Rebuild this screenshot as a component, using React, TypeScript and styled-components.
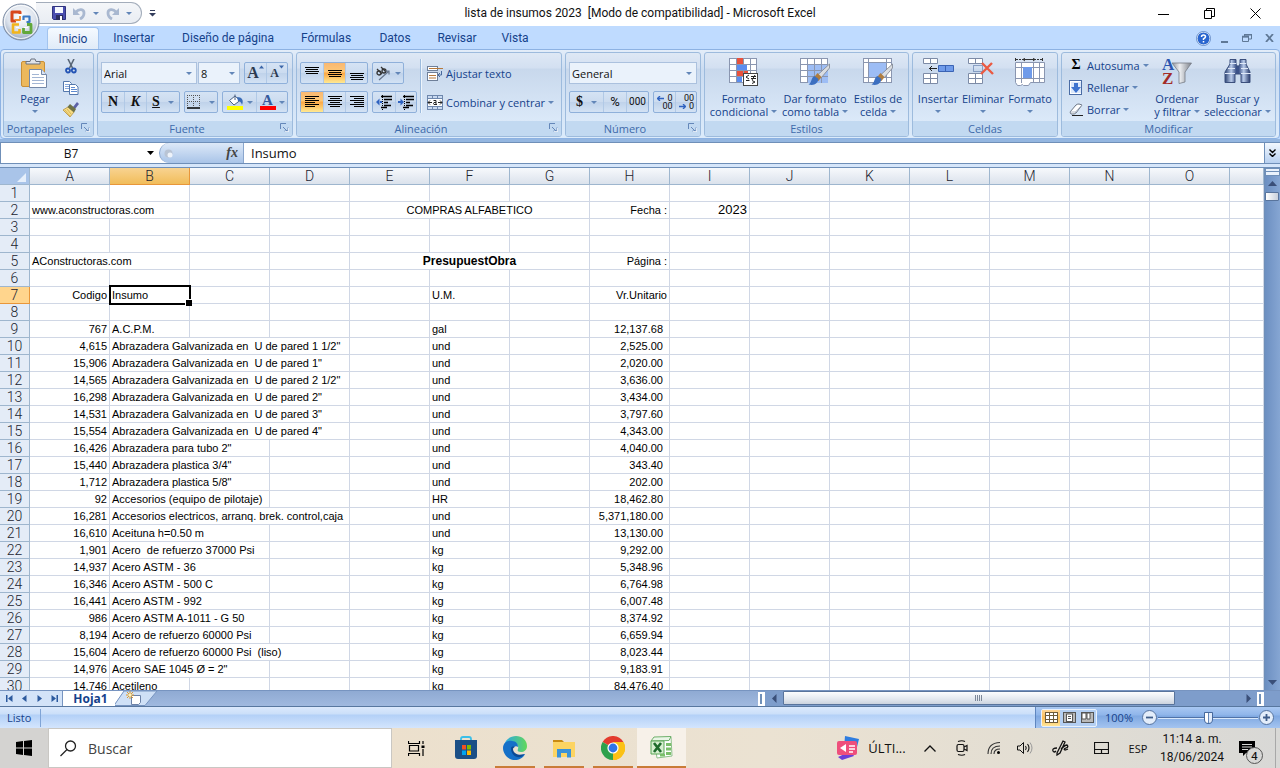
import React from "react";
import styled, { createGlobalStyle, css } from "styled-components";

const ui = `"Open Sans", "Noto Sans", sans-serif`;
const light = `Roboto, "Open Sans", sans-serif`;
const navy = "#15428b";

const GlobalStyle = createGlobalStyle`
  * { box-sizing: border-box; }
  body { margin: 0; background: #fff; font-family: ${ui}; font-size: 11px; overflow: hidden; }
  button, input, select { font: inherit; color: inherit; margin: 0; padding: 0; border: 0; background: none; border-radius: 0; outline: none; }
  button { display: inline-flex; align-items: center; justify-content: center; }
  svg { display: block; flex: none; }
`;

const Window = styled.div`
  display: flex;
  flex-direction: column;
  height: 100vh;
  overflow: hidden;
`;

/* Title bar */
const TitleBar = styled.header`
  position: relative;
  display: grid;
  grid-template-columns: 1fr auto 1fr;
  align-items: center;
  height: 26px;
  flex: none;
  background: #fff;
`;
const Title = styled.h1`
  margin: 0;
  font-family: ${light};
  font-size: 12px;
  font-weight: 400;
  color: #111;
  white-space: pre;
`;
const OfficeButton = styled.button`
  position: absolute;
  left: 1px;
  top: 2px;
  z-index: 2;
`;
const QuickAccess = styled.div`
  display: flex;
  align-items: center;
  margin-left: 36px;
`;
const QuickPill = styled.div`
  display: flex;
  align-items: center;
  gap: 7px;
  width: 106px;
  height: 22px;
  padding-left: 16px;
  border: 1px solid #a3adbb;
  border-left: 0;
  border-radius: 0 11px 11px 0;
  background: linear-gradient(#f4f6f9, #e9edf3);
`;
const QuickMore = styled.button`
  width: 20px;
  height: 20px;
`;
const WindowButtons = styled.div`
  display: flex;
  justify-content: flex-end;
  padding-right: 2px;
`;
const WindowButton = styled.button`
  width: 46px;
  height: 24px;
`;

/* Tabs */
const TabRow = styled.nav`
  display: flex;
  align-items: flex-end;
  height: 23px;
  flex: none;
  padding-left: 47px;
  background: #bfdbff;
  font-family: ${light};
  font-size: 12px;
`;
const RibbonTab = styled.button<{ $w: number; $on?: boolean }>`
  width: ${(p) => p.$w}px;
  height: 22px;
  color: ${navy};
  ${(p) =>
    p.$on &&
    css`
      border: 1px solid #a2c4ef;
      border-bottom: 0;
      border-radius: 4px 4px 0 0;
      background: linear-gradient(#f5faff, #e0ebf8);
    `}
`;
const DocButtons = styled.div`
  display: flex;
  align-items: center;
  height: 22px;
  margin-left: auto;
`;
const DocButton = styled.button`
  width: 22px;
  height: 22px;
`;

/* Ribbon */
const RibbonFrame = styled.section`
  flex: none;
  height: 93px;
  border-bottom: 3px solid #94b6e0;
  background: #bfdbff;
`;
const Ribbon = styled.div`
  display: flex;
  gap: 3px;
  height: 90px;
  padding: 2px 2px;
  border: 1px solid #8db2e3;
  border-radius: 4px;
  background: linear-gradient(#e3edf9, #cbdcf1 20px, #dcebfb);
`;
const GroupBox = styled.div<{ $w: number }>`
  display: flex;
  flex-direction: column;
  flex: none;
  width: ${(p) => p.$w}px;
  height: 85px;
  border: 1px solid #9dbbdd;
  border-radius: 3px;
  background: linear-gradient(#dee8f5 0, #d3e0f1 15px, #c8d8ec 16px, #dbe9f9 68px);
  overflow: hidden;
`;
const GroupBody = styled.div`
  display: flex;
  flex: 1;
  padding: 0 3px;
`;
const GroupLabel = styled.div`
  position: relative;
  height: 15px;
  line-height: 15px;
  text-align: center;
  color: #3e6aaa;
  background: #c2d9f1;
`;
const LaunchLabel = styled.span`
  display: block;
  padding-right: 16px;
`;
const Launcher = styled.button`
  position: absolute;
  right: 3px;
  top: 2px;
`;
const Rows = styled.div`
  display: flex;
  flex-direction: column;
  gap: 7px;
  padding-top: 9px;
`;
const ControlRow = styled.div`
  display: flex;
  gap: 4px;
  height: 22px;
`;
const Joined = styled.div`
  display: flex;
  gap: 1px;
`;
const Combo = styled.div<{ $w: number }>`
  position: relative;
  display: flex;
  align-items: center;
  width: ${(p) => p.$w}px;
  height: 22px;
  border: 1px solid #abc1de;
  background: #eaf2fb;
`;
const ComboSelect = styled.select`
  appearance: none;
  flex: 1;
  width: 100%;
  height: 20px;
  padding-left: 2px;
  color: #111;
`;
const ComboArrow = styled.span`
  position: absolute;
  right: 4px;
  pointer-events: none;
`;
const ButtonGroup = styled.div`
  display: flex;
  height: 22px;
  border: 1px solid #8fb0da;
  border-radius: 2px;
  background: linear-gradient(#d5e3f4 0, #cbdbef 10px, #bfd2ea 10px, #d3e2f4);
`;
const Tool = styled.button<{ $w: number; $on?: boolean }>`
  width: ${(p) => p.$w}px;
  height: 20px;
  gap: 3px;
  color: #111;
  & + & { border-left: 1px solid #b1c9e6; }
  ${(p) =>
    p.$on &&
    css`
      background: linear-gradient(#f9b872, #fdc877 9px, #fba645 10px, #ffe992);
    `}
`;
const Glyph = styled.span<{ $italic?: boolean; $under?: boolean; $size?: number }>`
  font-family: "Liberation Serif", serif;
  font-weight: 700;
  font-size: ${(p) => p.$size ?? 14}px;
  line-height: 16px;
  font-style: ${(p) => (p.$italic ? "italic" : "normal")};
  text-decoration: ${(p) => (p.$under ? "underline" : "none")};
`;
const Percent = styled.span`
  font: 400 13px/16px ${light};
`;
const Thousands = styled.span`
  font: 400 10px/16px ${light};
`;
const Gap = styled.span`
  width: 2px;
`;
const SizeMark = styled.span`
  display: flex;
  align-items: flex-start;
  color: #2c3a50;
`;
const Separator = styled.div`
  width: 2px;
  height: 54px;
  margin: 6px 5px 0 3px;
  border-left: 1px solid #9dbbdd;
  border-right: 1px solid #eef5fc;
`;
const TextTool = styled.button`
  gap: 3px;
  height: 22px;
  justify-content: flex-start;
  color: ${navy};
  white-space: nowrap;
`;
const SmallTools = styled.div`
  display: flex;
  flex-direction: column;
  align-items: flex-start;
  width: 86px;
  padding: 1px 0 0 3px;
`;
const ClipTools = styled.div`
  display: flex;
  flex-direction: column;
  align-items: center;
  gap: 7px;
  width: 16px;
  padding-top: 6px;
`;
const BigTool = styled.button<{ $w: number }>`
  flex-direction: column;
  justify-content: flex-start;
  flex: none;
  width: ${(p) => p.$w}px;
  height: 68px;
  padding-top: 5px;
  color: ${navy};
  white-space: nowrap;
`;
const BigIcon = styled.span`
  display: block;
  height: 34px;
`;
const BigLine = styled.span`
  display: flex;
  align-items: center;
  gap: 3px;
  height: 13px;
  line-height: 13px;
`;
const CaretMark = styled.i<{ $dark?: boolean }>`
  display: block;
  flex: none;
  width: 0;
  border: 3px solid transparent;
  border-top-color: ${(p) => (p.$dark ? "#111" : "#6286b8")};
  border-bottom: 0;
`;

/* Formula bar */
const FormulaBar = styled.div`
  display: flex;
  flex: none;
  height: 22px;
  border: 1px solid #6f8fb8;
  border-right: 0;
  background: #fff;
`;
const NameBox = styled.input`
  width: 140px;
  text-align: center;
  font-size: 12px;
  color: #111;
`;
const NameArrow = styled.button`
  width: 18px;
`;
const FxArea = styled.div`
  display: flex;
  align-items: center;
  justify-content: space-between;
  width: 85px;
  padding: 0 5px 0 4px;
  border: 1px solid #8aa6cd;
  border-width: 0 1px 0 1px;
  border-radius: 10px 0 0 10px;
  background: linear-gradient(#dde9f8, #a9c4e8);
`;
const Fx = styled.button`
  font: italic 700 14px/16px "Liberation Serif", serif;
  color: #444;
`;
const FormulaInput = styled.input`
  flex: 1;
  min-width: 0;
  padding-left: 7px;
  font-size: 13px;
  color: #111;
`;
const ExpandButton = styled.button`
  width: 16px;
  border-left: 1px solid #6f8fb8;
  background: linear-gradient(#f3f8fe, #b7d0f0);
`;
const BarGap = styled.div`
  flex: none;
  height: 3px;
  background: #d6e6fa;
`;

/* Sheet */
const SheetArea = styled.main`
  display: flex;
  flex: 1;
  min-height: 0;
  border-top: 1px solid #6f8fb8;
`;
const SheetView = styled.div`
  flex: 1;
  min-width: 0;
  overflow: hidden;
`;
const Grid = styled.table`
  width: 100%;
  table-layout: fixed;
  border-collapse: separate;
  border-spacing: 0;
  font-family: "Liberation Sans", Arial, sans-serif;
  font-size: 11px;
  line-height: 16px;
  color: #000;
`;
const Col = styled.col<{ $w: number }>`
  width: ${(p) => p.$w}px;
`;
const ColHead = styled.th<{ $on?: boolean }>`
  height: 17px;
  padding: 0;
  border-right: 1px solid ${(p) => (p.$on ? "#e8963a" : "#9eb6ce")};
  border-bottom: 1px solid ${(p) => (p.$on ? "#e8963a" : "#9eb6ce")};
  background: ${(p) => (p.$on ? "linear-gradient(#f8d391, #f1bd5a)" : "linear-gradient(#f7f9fc, #dbe2ec)")};
  font: 300 14px/16px ${light};
  color: #1b2430;
`;
const Corner = styled.th`
  height: 17px;
  padding: 0 3px 2px 0;
  border-right: 1px solid #9eb6ce;
  border-bottom: 1px solid #9eb6ce;
  background: #a9c4e9;
  vertical-align: bottom;
`;
const CornerMark = styled.svg`
  margin-left: auto;
`;
const RowHead = styled.th<{ $on?: boolean }>`
  height: 17px;
  padding: 0;
  border-right: 1px solid ${(p) => (p.$on ? "#e8963a" : "#9eb6ce")};
  border-bottom: 1px solid ${(p) => (p.$on ? "#e8963a" : "#9eb6ce")};
  background: ${(p) => (p.$on ? "#ffd58d" : "#e4ecf7")};
  font: 300 14px/16px ${light};
  color: #1b2430;
`;
type CellProps = { $align?: string; $pad?: number; $bold?: boolean; $large?: boolean; $on?: boolean };
const Cell = styled.td<CellProps>`
  height: 17px;
  padding: 0 ${(p) => p.$pad ?? 2}px 0 2px;
  border-right: 1px solid #d0d7e5;
  border-bottom: 1px solid #d0d7e5;
  text-align: ${(p) => p.$align ?? "left"};
  white-space: pre;
  ${(p) => p.$bold && css`font-weight: 700; font-size: 12px;`}
  ${(p) => p.$large && css`font-size: 13px;`}
  ${(p) =>
    p.$on &&
    css`
      position: relative;
      &::before { content: ""; position: absolute; inset: -2px -2px -2px -1px; border: 2px solid #000; }
      &::after { content: ""; position: absolute; right: -3px; bottom: -3px; width: 6px; height: 6px; background: #000; border: 1px solid #fff; border-width: 1px 0 0 1px; }
    `}
`;

/* Scroll bars */
const VScroll = styled.div`
  display: flex;
  flex-direction: column;
  width: 16px;
  flex: none;
  border-left: 1px solid #6f8fb8;
  background: linear-gradient(90deg, #6c8fc1, #86a6d3);
`;
const SplitHandle = styled.div`
  height: 8px;
  border: 1px solid #6f8fb8;
  background: linear-gradient(#eaf2fc 2px, #6f8fb8 2px, #6f8fb8 3px, #eaf2fc 3px);
`;
const VButton = styled.button`
  width: 15px;
  height: 16px;
`;
const VThumb = styled.div`
  height: 9px;
  margin: 0 1px 0 0;
  border: 1px solid #59749c;
  border-radius: 1px;
  background: linear-gradient(90deg, #fff, #c8d0dc);
`;
const Filler = styled.div`
  flex: 1;
`;
const SheetBar = styled.div`
  display: flex;
  flex: none;
  height: 17px;
  border-top: 1px solid #7794c0;
  border-bottom: 1px solid #58779f;
  background: linear-gradient(#8faad3, #a0b9df);
`;
const TabsArea = styled.div`
  display: flex;
  flex: 3;
  min-width: 0;
`;
const NavButtons = styled.div`
  display: flex;
  width: 63px;
  padding-left: 2px;
  border-right: 1px solid #7794c0;
  background: #d3e3f8;
`;
const NavButton = styled.button`
  width: 15px;
  height: 15px;
`;
const SheetTab = styled.button`
  width: 52px;
  height: 15px;
  padding-left: 3px;
  background: #fff;
  color: ${navy};
  font-size: 12px;
  font-weight: 700;
  line-height: 14px;
`;
const NewSheet = styled.button`
  height: 15px;
`;
const HScroll = styled.div`
  display: flex;
  align-items: center;
  flex: 2;
  min-width: 0;
  background: #7e9dcb;
`;
const HHandle = styled.div`
  width: 7px;
  height: 14px;
  border: 2px solid #fff;
  background: #6f8fb8;
  border-right-width: 3px;
`;
const HButton = styled.button`
  width: 18px;
  height: 15px;
`;
const HTrack = styled.div`
  flex: 1;
  height: 15px;
`;
const HThumb = styled.div`
  display: flex;
  align-items: center;
  justify-content: center;
  width: 86%;
  height: 14px;
  border: 1px solid #59749c;
  border-radius: 1px;
  background: linear-gradient(#fcfdfe, #e3e8ef 7px, #ccd3de);
`;
const BarCorner = styled.div`
  width: 16px;
  background: #7e9dcb;
`;

/* Status bar */
const StatusBar = styled.footer`
  display: flex;
  align-items: center;
  flex: none;
  height: 21px;
  color: ${navy};
  background: linear-gradient(#dbe9fc 0, #cbdff9 7px, #b3d0f7 8px, #d3e5fd);
`;
const StatusText = styled.span`
  width: 41px;
  padding-left: 7px;
  height: 18px;
  line-height: 18px;
  border-right: 1px solid #7fa4d6;
`;
const ViewTools = styled.div`
  display: flex;
  align-items: center;
  height: 21px;
  margin-left: auto;
  padding: 0 5px;
  border-left: 1px solid #5f86bf;
  background: linear-gradient(#a9c8f2 0, #8fb5ea 8px, #7fa8e1 9px, #a4c4f0);
`;
const ViewButtons = styled.div`
  display: flex;
  height: 18px;
  border: 1px solid #e8f1fc;
  border-radius: 2px;
  background: #b4cff2;
`;
const ViewButton = styled.button<{ $on?: boolean }>`
  width: 18px;
  height: 16px;
  ${(p) => p.$on && css`background: linear-gradient(#fdd596, #fbbd55 8px, #ffe69a);`}
`;
const ZoomValue = styled.button`
  width: 44px;
`;
const ZoomRange = styled.input`
  appearance: none;
  width: 100px;
  height: 18px;
  background: linear-gradient(transparent 8px, #4f72a8 8px, #4f72a8 9px, #d9e8fb 9px, #d9e8fb 10px, transparent 10px);
  &::-webkit-slider-thumb {
    appearance: none;
    width: 9px;
    height: 12px;
    border: 1px solid #47699d;
    border-radius: 1px 1px 5px 5px;
    background: linear-gradient(90deg, #fff 3px, #6687b8 3px, #6687b8 4px, #dfeafa 4px);
  }
`;

/* Taskbar */
const Taskbar = styled.footer`
  display: flex;
  flex: none;
  height: 40px;
  background: linear-gradient(90deg, #ece0cd 30%, #ebe2d2 60%, #e3ded3 80%, #d8d8d6);
  color: #111;
`;
const StartButton = styled.button`
  width: 48px;
  background: #d4d3d1;
`;
const SearchBox = styled.label`
  display: flex;
  align-items: center;
  gap: 11px;
  width: 344px;
  padding-left: 11px;
  border: 1px solid #c9c7c3;
  background: #fff;
`;
const SearchInput = styled.input`
  flex: 1;
  min-width: 0;
  font-size: 14px;
  &::placeholder { color: #444; opacity: 1; }
`;
const TaskButton = styled.button<{ $open?: boolean; $active?: boolean }>`
  width: 49px;
  height: 40px;
  ${(p) => p.$open && css`background: linear-gradient(#c97c38, #c97c38) bottom / 40px 2px no-repeat;`}
  ${(p) => p.$active && css`background: linear-gradient(#c97c38, #c97c38) bottom / 100% 2px no-repeat, #f7f1e9;`}
`;
const Tray = styled.div`
  display: flex;
  align-items: center;
  margin-left: auto;
`;
const TrayButton = styled.button<{ $w: number }>`
  width: ${(p) => p.$w}px;
  height: 40px;
  gap: 8px;
`;
const NewsText = styled.span`
  font-size: 13px;
`;
const Clock = styled.button`
  flex-direction: column;
  width: 72px;
  font-family: ${light};
  font-size: 12px;
  line-height: 18px;
`;
const Notice = styled.button`
  position: relative;
  justify-content: flex-start;
  width: 47px;
  height: 40px;
  padding-left: 11px;
`;
const Badge = styled.span`
  position: absolute;
  left: 18px;
  top: 19px;
  width: 17px;
  height: 17px;
  border: 1px solid #555;
  border-radius: 9px;
  background: #d8d8d6;
  font-size: 11px;
  font-weight: 600;
  line-height: 15px;
`;
const ShowDesktop = styled.button`
  width: 5px;
  height: 40px;
  border-left: 1px solid #a8a8a8;
`;

const Caret = ({ dark }: { dark?: boolean }) => <CaretMark $dark={dark} />;

const Lines = ({ y, rows, align }: { y: number; rows: number[]; align: "l" | "c" | "r" }) => (
  <svg width="16" height="16" viewBox="0 0 16 16">
    {rows.map((w, i) => (
      <rect key={i} x={align === "l" ? 1 : align === "c" ? (16 - w) / 2 : 15 - w} y={y + i * 2} width={w} height="1" fill="#000" />
    ))}
  </svg>
);

const Orb = () => (
  <svg width="39" height="39" viewBox="0 0 39 39">
    <defs>
      <radialGradient id="orb" cx="50%" cy="35%" r="65%">
        <stop offset="0" stopColor="#fff" />
        <stop offset=".6" stopColor="#dbe2ec" />
        <stop offset="1" stopColor="#94a5bf" />
      </radialGradient>
    </defs>
    <circle cx="20" cy="20" r="18" fill="url(#orb)" stroke="#7d8ca3" />
    <circle cx="20" cy="20" r="16.5" fill="none" stroke="#fff" strokeWidth="1.2" opacity=".8" />
    <g fill="none" strokeLinejoin="round">
      <path d="M19 12V10h-8v9h4" stroke="#d8461c" strokeWidth="3" />
      <path d="M14 18h5v-4" stroke="#ec8a2e" strokeWidth="1.800" />
      <path d="M22.500 18v-3.500h6V20h-3" stroke="#3a79c4" strokeWidth="2.200" />
      <path d="M18 22.500h-6v8h6.500V27" stroke="#f2b51d" strokeWidth="2.600" />
      <path d="M22.500 26v4.500h7.500v-8h-4" stroke="#62a83a" strokeWidth="2.800" />
      <path d="M15 25.500h3M23 25.500h4" stroke="#fff" strokeWidth="1.200" />
    </g>
  </svg>
);

const SaveIcon = () => (
  <svg width="14" height="14" viewBox="0 0 14 14">
    <path d="M.5.5h13v13H1.5l-1-1z" fill="#4a4eb0" stroke="#30347f" />
    <rect x="3" y="1" width="8" height="6" fill="#f5f8ff" />
    <rect x="4" y="9" width="7" height="5" fill="#2b2e60" />
    <rect x="8" y="10" width="2" height="4" fill="#fff" />
  </svg>
);
const UndoIcon = ({ flip }: { flip?: boolean }) => (
  <svg width="13" height="13" viewBox="0 0 13 13">
    <g transform={flip ? "matrix(-1 0 0 1 13 0)" : undefined}>
      <path d="M3 5C6 1.500 11 2 11 6c0 3-2 5-4 6" fill="none" stroke="#a9b8d0" strokeWidth="2.800" />
      <path d="M0 1v7h7z" fill="#a9b8d0" />
    </g>
  </svg>
);
const LaunchIcon = () => (
  <svg width="9" height="9" viewBox="0 0 9 9">
    <path d="M.5 6V.5H6M3 4l4 4M8 4.500V8H4.500" fill="none" stroke="#6487b9" />
    <path d="M8.500 5v3.500H5" fill="none" stroke="#fff" opacity=".7" />
  </svg>
);
const PasteIcon = () => (
  <svg width="30" height="32" viewBox="0 0 30 32">
    <rect x="1.500" y="3.500" width="23" height="25" rx="1.500" fill="#ecb85c" stroke="#c98f36" />
    <path d="M6 6V3.500h4L11 1h4l1 2.500h4V6z" fill="#dfe3ea" stroke="#6b7280" />
    <path d="M9.500 11.500h12l5 5v13h-17z" fill="#fff" stroke="#7488a8" />
    <path d="M21.500 11.500v5h5" fill="#d9e4f4" stroke="#7488a8" />
    <path d="M12 16.500h7M12 19.500h12M12 22.500h12M12 25.500h12" stroke="#a3b6d4" />
  </svg>
);
const CutIcon = () => (
  <svg width="12" height="15" viewBox="0 0 12 15">
    <path d="M3 0l4.500 9M9 0L4.500 9" stroke="#5b6878" strokeWidth="1.600" />
    <circle cx="3" cy="11.500" r="2" fill="none" stroke="#2454b4" strokeWidth="1.800" />
    <circle cx="8.800" cy="11.500" r="2" fill="none" stroke="#2454b4" strokeWidth="1.800" />
  </svg>
);
const CopyIcon = () => (
  <svg width="16" height="14" viewBox="0 0 16 14">
    <path d="M.5.5h6l2 2v8h-8z" fill="#fff" stroke="#5478ad" />
    <path d="M2 3.500h4M2 5.500h5M2 7.500h4" stroke="#86a8dc" />
    <path d="M6.500 3.500h6l2.500 2.500v7.500H6.500z" fill="#fff" stroke="#5478ad" />
    <path d="M8 6.500h4M8 8.500h6M8 10.500h6" stroke="#5f8bd0" />
  </svg>
);
const BrushIcon = () => (
  <svg width="16" height="15" viewBox="0 0 16 15">
    <path d="M10 5l4-5 2 2-4 5z" fill="#5d62a6" />
    <path d="M0 8l5-3 6 5-4 5z" fill="#f5dc85" stroke="#b5903c" strokeWidth=".8" />
    <path d="M2 8l5 6M4 7l4 5" stroke="#d3aa49" strokeWidth=".8" />
    <path d="M7 2l6 5-2 3.500-6.500-5.500z" fill="#6f7346" />
  </svg>
);
const BorderIcon = () => (
  <svg width="14" height="14" viewBox="0 0 14 14">
    <path d="M.5 0v12M6.500 0v12M12.500 0v12M0 .5h13M0 6.500h13" stroke="#555" strokeDasharray="1 1" />
    <path d="M0 13h13" stroke="#000" strokeWidth="1.500" />
  </svg>
);
const FillIcon = () => (
  <svg width="17" height="16" viewBox="0 0 17 16">
    <path d="M2.500 6.500L8 2l5 4.500-6 4.500z" fill="#fff" stroke="#4c6284" />
    <path d="M8 6V.5" stroke="#4c6284" />
    <path d="M10 3c5 0 7 3 5 8-1-3-2-4-4-4z" fill="#3a6cb8" />
    <rect y="12" width="16" height="4" fill="#ff0" />
  </svg>
);
const FontColor = styled.span`
  display: block;
  width: 16px;
  height: 16px;
  border-bottom: 4px solid #f00;
  text-align: center;
  color: #34599c;
  font: 700 15px/12px "Liberation Serif", serif;
`;
const SizeTick = ({ down }: { down?: boolean }) => (
  <svg width="5" height="4" viewBox="0 0 5 4"><path d={down ? "M0 .5h5L2.500 3.500z" : "M0 3.500h5L2.500.5z"} fill="#3c66a8" /></svg>
);
const OrientIcon = () => (
  <svg width="17" height="15" viewBox="0 0 17 15">
    <g fill="none" stroke="#333" strokeWidth="1.300">
      <circle cx="4" cy="7" r="2" />
      <path d="M2 3l5 5M6 1l5 5" />
      <circle cx="9" cy="5" r="2" />
    </g>
    <path d="M4 14l10-9M10.500 5H14v3.500" fill="none" stroke="#66758c" strokeWidth="1.200" />
  </svg>
);
const IndentIcon = ({ right }: { right?: boolean }) => (
  <svg width="17" height="15" viewBox="0 0 17 15">
    <path d="M6.500 0v15" stroke="#000" strokeDasharray="1 1" />
    <path d="M5 1.500h11M8 4.500h8M8 7.500h4M8 10.500h7M5 12.500h6" stroke="#000" strokeWidth="1.400" />
    {right ? <path d="M2.500 3.500L6 7l-3.500 3.500zM0 6h3v2H0z" fill="#2f62c0" /> : <path d="M3.500 3.500L0 7l3.500 3.500zM3 6h3v2H3z" fill="#2f62c0" />}
  </svg>
);
const WrapIcon = () => (
  <svg width="16" height="15" viewBox="0 0 16 15">
    <rect x=".5" y=".5" width="10" height="4" fill="#fff" stroke="#6e7f99" />
    <path d="M2 2.500h14" stroke="#b6793c" />
    <rect x=".5" y="6.500" width="10" height="8" fill="#fff" stroke="#6e7f99" />
    <path d="M2 9.500h7M2 12h7" stroke="#b6793c" />
    <path d="M14.500 5v4h-3M13 7l-2 2 2 2" fill="none" stroke="#47699d" />
  </svg>
);
const MergeIcon = () => (
  <svg width="16" height="15" viewBox="0 0 16 15">
    <rect x=".5" y=".5" width="15" height="14" fill="#c9daf1" stroke="#6e87ad" />
    <path d="M5.500 0v4M10.500 0v4M5.500 11v4M10.500 11v4" stroke="#6e87ad" />
    <rect x=".5" y="3.500" width="15" height="8" fill="#fff" stroke="#6e87ad" />
    <path d="M1 7.500h4M11 7.500h4M3 5.500L1 7.500l2 2M13 5.500l2 2-2 2" fill="none" stroke="#222" />
    <path d="M6.500 5.500h2.500v4H7q-1-1 0-2h2M9 9.500h1" fill="none" stroke="#222" />
  </svg>
);
const DecimalArrow = ({ right }: { right?: boolean }) => (
  <svg width="7" height="5" viewBox="0 0 7 5">
    <path d={right ? "M0 2.500h6M4 0l2.500 2.500L4 5" : "M1 2.500h6M3 0L.5 2.500 3 5"} fill="none" stroke="#2f62c0" strokeWidth="1.300" />
  </svg>
);
const Decimals = styled.span`
  display: flex;
  flex-direction: column;
  width: 16px;
  font: 400 9px/8px ${light};
`;
const DecimalLine = styled.span`
  display: flex;
  align-items: center;
  justify-content: flex-end;
  gap: 3px;
  height: 8px;
`;

const GridBase = ({ inner }: { inner?: React.ReactNode }) => (
  <>
    <rect x=".5" y=".5" width="27" height="24" fill="#fff" stroke="#8a96b0" />
    {inner}
    <path d="M7.500 0v25M14.500 0v25M21.500 0v25M0 6.500h28M0 12.500h28M0 18.500h28" stroke="#8a96b0" />
  </>
);
const PaintBrush = () => (
  <g>
    <path d="M29.500 6v4L21 20l-3.500-3z" fill="#dadde2" stroke="#7d838d" strokeWidth=".8" />
    <path d="M21.500 19l-4-4-4 5 5 3z" fill="#b07d3f" />
    <path d="M14.500 18c-4 2-2 6-6 8.500 6 1.500 9-1 10-5.500z" fill="#3c6fc0" />
  </g>
);
const CondIcon = () => (
  <svg width="30" height="30" viewBox="0 0 30 30">
    <GridBase inner={<path d="M7 0h7v6H7zM7 12.500h12v6H7z" fill="#e8523c" />} />
    <path d="M8 7h10v5H8zM8 19h5v5H8z" fill="#5b8def" />
    <rect x="14.500" y="15.500" width="14" height="12" fill="#fff" stroke="#444" />
    <path d="M20 17l-3 2 3 2M17 22.500h3.500M22 18.500h5M22 20.500h5M26 17l-3 5M23 22.500l3 1.500-3 1.500" fill="none" stroke="#222" />
  </svg>
);
const TableFmtIcon = () => (
  <svg width="30" height="30" viewBox="0 0 30 30">
    <GridBase inner={<path d="M7 6h21v19H7z" fill="#9dbdf5" />} />
    <PaintBrush />
  </svg>
);
const CellStyleIcon = () => (
  <svg width="30" height="30" viewBox="0 0 30 30">
    <rect x=".5" y=".5" width="28" height="24" fill="#fff" stroke="#8a96b0" />
    <rect x="5" y="5" width="19" height="15" fill="#9dbdf5" />
    <path d="M5.500 0v25M23.500 0v25M0 4.500h29M0 19.500h29" stroke="#8a96b0" />
    <PaintBrush />
  </svg>
);
const InsertIcon = ({ del }: { del?: boolean }) => (
  <svg width="31" height="28" viewBox="0 0 31 28">
    <g fill="#fff" stroke="#7d8ba6">
      <path d="M.5.5h14v5H.5zM.5 15.500h14v5H.5zM.5 20.500h14v5H.5zM7.500.5v5M7.500 15.500v10" />
    </g>
    {del ? (
      <>
        <path d="M5.500 7.500h9v6h-9z" fill="none" stroke="#3f5f96" strokeDasharray="1 1" />
        <path d="M14 5l11 11M24 5L13 16" stroke="#ea5a42" strokeWidth="2.400" />
      </>
    ) : (
      <>
        <path d="M6 10.500h8M9 8l-2.500 2.500L9 13" fill="none" stroke="#222" />
        <path d="M15.500 7.500h15v6h-15zM22.500 7.500v6" fill="#6f9bea" stroke="#3a63b4" />
      </>
    )}
  </svg>
);
const FormatIcon = () => (
  <svg width="31" height="30" viewBox="0 0 31 30">
    <path d="M.5 0v3M27.500 0v3" stroke="#333" />
    <path d="M1 1.500h26" stroke="#333" strokeDasharray="2 1" />
    <path d="M8 1.500h12M10 0L8 1.500 10 3M18 0l2 1.500L18 3" fill="none" stroke="#333" />
    <path d="M.5 4.500h29v20h-14l-2 3h-5l-1-1-2 1h-3l-2-3z" fill="#fff" stroke="#8a96b0" />
    <path d="M6.500 4v21M18.500 4v21M24.500 4v21M0 9.500h30M0 20.500h30" stroke="#8a96b0" />
    <rect x="8" y="9" width="9" height="11" fill="#6f9bea" />
  </svg>
);
const FillDownIcon = () => (
  <svg width="16" height="15" viewBox="-1 0 16 15">
    <rect x=".5" y=".5" width="12" height="14" fill="#fff" stroke="#4a6ca5" />
    <rect x="2" y="2" width="10" height="11" fill="#dbe8fb" />
    <path d="M5 3h4v4h3l-5 6-5-6h3z" fill="#3d73cf" />
  </svg>
);
const EraserIcon = () => (
  <svg width="16" height="13" viewBox="-1 0 16 13">
    <path d="M1 9l6-7q1-1 3-1l3 1-6 8q-1 1-3 1H2z" fill="#fff" stroke="#6b7686" />
    <path d="M1 9h5.500L13 2M6.500 9v2" fill="none" stroke="#9aa5b5" strokeWidth=".8" />
    <path d="M3 12.500h11" stroke="#222" />
  </svg>
);
const SortFrame = styled.span`
  display: flex;
  width: 30px;
`;
const SortLetters = styled.span`
  display: flex;
  flex-direction: column;
  width: 10px;
  font: 700 17px/14px "Liberation Serif", serif;
`;
const SortLetter = styled.span<{ $tone: string }>`
  color: ${(p) => p.$tone};
`;
const SortIcon = () => (
  <SortFrame>
    <SortLetters>
      <SortLetter $tone="#2b56b0">A</SortLetter>
      <SortLetter $tone="#a32b26">Z</SortLetter>
    </SortLetters>
    <svg width="20" height="28" viewBox="0 0 20 28">
      <defs>
        <linearGradient id="funnel">
          <stop offset="0" stopColor="#8f949c" />
          <stop offset=".4" stopColor="#eceef1" />
          <stop offset="1" stopColor="#7d828b" />
        </linearGradient>
      </defs>
      <path d="M0 5h19.500L13 14v10l-6 1.500V14z" fill="url(#funnel)" stroke="#767c86" strokeWidth=".8" />
    </svg>
  </SortFrame>
);
const FindIcon = () => (
  <svg width="28" height="26" viewBox="0 0 28 26">
    <defs>
      <linearGradient id="bino">
        <stop offset="0" stopColor="#2f4574" />
        <stop offset=".25" stopColor="#b9cbea" />
        <stop offset=".45" stopColor="#3a5087" />
        <stop offset=".55" stopColor="#3a5087" />
        <stop offset=".75" stopColor="#b9cbea" />
        <stop offset="1" stopColor="#27396a" />
      </linearGradient>
    </defs>
    <path d="M6 1.500h6V6l1 2h2l1-2V1.500h6V6l4 8v10.500H17V16h-6v8.500H1V14l5-8z" fill="url(#bino)" stroke="#3b4f7c" />
    <path d="M1 15.500h10M17 15.500h10M6 5.500h6M16 5.500h6M4 10.500h7M17 10.500h7" stroke="#dfe8f8" />
  </svg>
);

const columns = "ABCDEFGHIJKLMNO".split("");

type Item = { c: string; t: string; span?: number } & CellProps;
const supply = (code: string, name: string, span: number, unit: string, price: string): Item[] => [
  { c: "A", t: code, $align: "right" },
  { c: "B", t: name, span },
  { c: "F", t: unit },
  { c: "H", t: price, $align: "right", $pad: 6 },
];
const sheet: Item[][] = [
  [],
  [
    { c: "A", t: "www.aconstructoras.com", span: 2 },
    { c: "E", t: "COMPRAS ALFABETICO", span: 3, $align: "center" },
    { c: "H", t: "Fecha :", $align: "right" },
    { c: "I", t: "2023", $align: "right", $large: true },
  ],
  [],
  [],
  [
    { c: "A", t: "AConstructoras.com", span: 2 },
    { c: "E", t: "PresupuestObra", span: 3, $align: "center", $bold: true },
    { c: "H", t: "Página :", $align: "right" },
  ],
  [],
  [
    { c: "A", t: "Codigo", $align: "right" },
    { c: "B", t: "Insumo", $on: true },
    { c: "F", t: "U.M." },
    { c: "H", t: "Vr.Unitario", $align: "right" },
  ],
  [],
  supply("767", "A.C.P.M.", 1, "gal", "12,137.68"),
  supply("4,615", 'Abrazadera Galvanizada en  U de pared 1 1/2"', 3, "und", "2,525.00"),
  supply("15,906", 'Abrazadera Galvanizada en  U de pared 1"', 3, "und", "2,020.00"),
  supply("14,565", 'Abrazadera Galvanizada en  U de pared 2 1/2"', 3, "und", "3,636.00"),
  supply("16,298", 'Abrazadera Galvanizada en  U de pared 2"', 3, "und", "3,434.00"),
  supply("14,531", 'Abrazadera Galvanizada en  U de pared 3"', 3, "und", "3,797.60"),
  supply("15,554", 'Abrazadera Galvanizada en  U de pared 4"', 3, "und", "4,343.00"),
  supply("16,426", 'Abrazadera para tubo 2"', 2, "und", "4,040.00"),
  supply("15,440", 'Abrazadera plastica 3/4"', 2, "und", "343.40"),
  supply("1,712", 'Abrazadera plastica 5/8"', 2, "und", "202.00"),
  supply("92", "Accesorios (equipo de pilotaje)", 2, "HR", "18,462.80"),
  supply("16,281", "Accesorios electricos, arranq. brek. control,caja", 3, "und", "5,371,180.00"),
  supply("16,610", "Aceituna h=0.50 m", 2, "und", "13,130.00"),
  supply("1,901", "Acero  de refuerzo 37000 Psi", 2, "kg", "9,292.00"),
  supply("14,937", "Acero ASTM - 36", 2, "kg", "5,348.96"),
  supply("16,346", "Acero ASTM - 500 C", 2, "kg", "6,764.98"),
  supply("16,441", "Acero ASTM - 992", 2, "kg", "6,007.48"),
  supply("986", "Acero ASTM A-1011 - G 50", 2, "kg", "8,374.92"),
  supply("8,194", "Acero de refuerzo 60000 Psi", 2, "kg", "6,659.94"),
  supply("15,604", "Acero de refuerzo 60000 Psi  (liso)", 3, "kg", "8,023.44"),
  supply("14,976", 'Acero SAE 1045 Ø = 2"', 2, "kg", "9,183.91"),
  supply("14,746", "Acetileno", 1, "kg", "84,476.40"),
];

const SheetRow = ({ items }: { items: Item[] }) => {
  const cells: React.ReactNode[] = [];
  for (let i = 0; i <= columns.length; ) {
    const item = items.find((x) => x.c === columns[i]);
    if (item) {
      const { c, t, span = 1, ...look } = item;
      cells.push(<Cell key={c} colSpan={span} {...look}>{t}</Cell>);
      i += span;
    } else {
      cells.push(<Cell key={i} />);
      i += 1;
    }
  }
  return <>{cells}</>;
};

const Group = ({ label, w, launch, children }: { label: string; w: number; launch?: boolean; children: React.ReactNode }) => (
  <GroupBox $w={w} role="group" aria-label={label}>
    <GroupBody>{children}</GroupBody>
    <GroupLabel>
      {launch ? <LaunchLabel>{label}</LaunchLabel> : label}
      {launch && <Launcher aria-label={`Opciones de ${label}`}><LaunchIcon /></Launcher>}
    </GroupLabel>
  </GroupBox>
);

const Big = ({ w, icon, lines }: { w: number; icon: React.ReactNode; lines: [string, string?] }) => (
  <BigTool $w={w}>
    <BigIcon>{icon}</BigIcon>
    <BigLine>{lines[0]}</BigLine>
    <BigLine>{lines[1]}<Caret /></BigLine>
  </BigTool>
);

const Sigma = styled.span`
  width: 16px;
  font: 700 14px/16px "Liberation Serif", serif;
  color: #000;
  text-align: center;
`;
const NavGlyph = ({ d, dark }: { d: string; dark?: boolean }) => (
  <svg width="9" height="9" viewBox="0 0 9 9"><path d={d} fill={dark ? "#3a4f78" : "#2c5a9e"} /></svg>
);
const ZoomGlyph = ({ d }: { d: string }) => (
  <svg width="17" height="17" viewBox="0 0 17 17">
    <circle cx="8.500" cy="8.500" r="7" fill="#e3edfa" stroke="#55739f" />
    <path d={d} stroke="#3f5d8a" strokeWidth="1.800" />
  </svg>
);

export default function App() {
  return (
    <Window>
      <GlobalStyle />
      <TitleBar>
        <OfficeButton aria-label="Botón de Office"><Orb /></OfficeButton>
        <QuickAccess>
          <QuickPill>
            <button aria-label="Guardar"><SaveIcon /></button>
            <button aria-label="Deshacer"><UndoIcon /></button>
            <Caret />
            <button aria-label="Rehacer"><UndoIcon flip /></button>
            <Caret />
          </QuickPill>
          <QuickMore aria-label="Personalizar barra">
            <svg width="7" height="7" viewBox="0 0 7 7"><path d="M1 0h5v1H1zM0 3h7L3.500 6.500z" fill="#333d5c" /></svg>
          </QuickMore>
        </QuickAccess>
        <Title>lista de insumos 2023  [Modo de compatibilidad] - Microsoft Excel</Title>
        <WindowButtons>
          <WindowButton aria-label="Minimizar">
            <svg width="11" height="11" viewBox="0 0 11 11"><path d="M0 6.500h11" stroke="#000" /></svg>
          </WindowButton>
          <WindowButton aria-label="Restaurar">
            <svg width="11" height="11" viewBox="0 0 11 11"><path d="M.5 2.500h7v8h-7zM2.500 2V.5h8v8H8" fill="none" stroke="#000" /></svg>
          </WindowButton>
          <WindowButton aria-label="Cerrar">
            <svg width="11" height="11" viewBox="0 0 11 11"><path d="M.5.5l10 10M10.500.5l-10 10" stroke="#000" /></svg>
          </WindowButton>
        </WindowButtons>
      </TitleBar>

      <TabRow>
        <RibbonTab $w={52} $on>Inicio</RibbonTab>
        <RibbonTab $w={70}>Insertar</RibbonTab>
        <RibbonTab $w={118}>Diseño de página</RibbonTab>
        <RibbonTab $w={78}>Fórmulas</RibbonTab>
        <RibbonTab $w={60}>Datos</RibbonTab>
        <RibbonTab $w={64}>Revisar</RibbonTab>
        <RibbonTab $w={52}>Vista</RibbonTab>
        <DocButtons>
          <DocButton aria-label="Ayuda">
            <svg width="15" height="15" viewBox="0 0 15 15">
              <circle cx="7.500" cy="7.500" r="6.500" fill="#2a66cf" stroke="#fff" />
              <circle cx="7.500" cy="7.500" r="7" fill="none" stroke="#4d79bd" strokeWidth=".8" />
              <path d="M5.500 6q0-2 2-2t2 1.800q0 1-2 2V9M7.500 10v1.500" fill="none" stroke="#fff" strokeWidth="1.500" />
            </svg>
          </DocButton>
          <DocButton aria-label="Minimizar libro">
            <svg width="8" height="9" viewBox="0 0 8 9"><rect y="7" width="7" height="2" fill="#5f7896" /></svg>
          </DocButton>
          <DocButton aria-label="Restaurar libro">
            <svg width="10" height="8" viewBox="0 0 10 8"><path d="M.5 3h6v4.500h-6zM2.500 2.500v-2h7v4.500H7" fill="none" stroke="#5f7896" /><path d="M0 2.500h7M2 .7h8" stroke="#5f7896" strokeWidth="1.600" /></svg>
          </DocButton>
          <DocButton aria-label="Cerrar libro">
            <svg width="9" height="8" viewBox="0 0 9 8"><path d="M1 0l7 8M8 0L1 8" stroke="#5f7896" strokeWidth="1.800" /></svg>
          </DocButton>
        </DocButtons>
      </TabRow>

      <RibbonFrame>
        <Ribbon>
          <Group label="Portapapeles" w={91} launch>
            <Big w={56} icon={<PasteIcon />} lines={["Pegar"]} />
            <ClipTools>
              <button aria-label="Cortar"><CutIcon /></button>
              <button aria-label="Copiar"><CopyIcon /></button>
              <button aria-label="Copiar formato"><BrushIcon /></button>
            </ClipTools>
          </Group>

          <Group label="Fuente" w={196} launch>
            <Rows>
              <ControlRow>
                <Joined>
                  <Combo $w={96}><ComboSelect aria-label="Fuente"><option>Arial</option></ComboSelect><ComboArrow><Caret /></ComboArrow></Combo>
                  <Combo $w={42}><ComboSelect aria-label="Tamaño"><option>8</option></ComboSelect><ComboArrow><Caret /></ComboArrow></Combo>
                </Joined>
                <ButtonGroup>
                  <Tool $w={21} aria-label="Aumentar tamaño"><SizeMark><Glyph $size={16}>A</Glyph><SizeTick /></SizeMark></Tool>
                  <Tool $w={21} aria-label="Disminuir tamaño"><SizeMark><Glyph $size={12}>A</Glyph><SizeTick down /></SizeMark></Tool>
                </ButtonGroup>
              </ControlRow>
              <ControlRow>
                <ButtonGroup>
                  <Tool $w={22}><Glyph>N</Glyph></Tool>
                  <Tool $w={22}><Glyph $italic>K</Glyph></Tool>
                  <Tool $w={33}><Glyph $under>S</Glyph><Gap /><Caret /></Tool>
                </ButtonGroup>
                <ButtonGroup><Tool $w={32} aria-label="Bordes"><BorderIcon /><Gap /><Caret /></Tool></ButtonGroup>
                <ButtonGroup>
                  <Tool $w={33} aria-label="Color de relleno"><FillIcon /><Caret /></Tool>
                  <Tool $w={31} aria-label="Color de fuente"><FontColor>A</FontColor><Caret /></Tool>
                </ButtonGroup>
              </ControlRow>
            </Rows>
          </Group>

          <Group label="Alineación" w={266} launch>
            <Rows>
              <ControlRow>
                <ButtonGroup>
                  <Tool $w={22} aria-label="Arriba"><Lines y={2} rows={[14, 12, 14, 12]} align="c" /></Tool>
                  <Tool $w={22} $on aria-label="Medio"><Lines y={5} rows={[14, 12, 14, 12]} align="c" /></Tool>
                  <Tool $w={22} aria-label="Abajo"><Lines y={8} rows={[14, 12, 14, 12]} align="c" /></Tool>
                </ButtonGroup>
                <ButtonGroup><Tool $w={30} aria-label="Orientación"><OrientIcon /><Caret /></Tool></ButtonGroup>
              </ControlRow>
              <ControlRow>
                <ButtonGroup>
                  <Tool $w={22} $on aria-label="Izquierda"><Lines y={2} rows={[14, 10, 14, 10, 14, 10]} align="l" /></Tool>
                  <Tool $w={22} aria-label="Centro"><Lines y={2} rows={[14, 10, 14, 10, 14, 10]} align="c" /></Tool>
                  <Tool $w={22} aria-label="Derecha"><Lines y={2} rows={[14, 10, 14, 10, 14, 10]} align="r" /></Tool>
                </ButtonGroup>
                <ButtonGroup>
                  <Tool $w={22} aria-label="Disminuir sangría"><IndentIcon /></Tool>
                  <Tool $w={21} aria-label="Aumentar sangría"><IndentIcon right /></Tool>
                </ButtonGroup>
              </ControlRow>
            </Rows>
            <Separator />
            <Rows>
              <TextTool><WrapIcon />Ajustar texto</TextTool>
              <TextTool><MergeIcon />Combinar y centrar<Caret /></TextTool>
            </Rows>
          </Group>

          <Group label="Número" w={136} launch>
            <Rows>
              <Combo $w={128}><ComboSelect aria-label="Formato de número"><option>General</option></ComboSelect><ComboArrow><Caret /></ComboArrow></Combo>
              <ControlRow>
                <ButtonGroup>
                  <Tool $w={33}><Glyph>$</Glyph><Gap /><Caret /></Tool>
                  <Tool $w={23}><Percent>%</Percent></Tool>
                  <Tool $w={22}><Thousands>000</Thousands></Tool>
                </ButtonGroup>
                <ButtonGroup>
                  <Tool $w={21} aria-label="Aumentar decimales"><Decimals><DecimalLine><DecimalArrow />0</DecimalLine><DecimalLine>00</DecimalLine></Decimals></Tool>
                  <Tool $w={21} aria-label="Disminuir decimales"><Decimals><DecimalLine>00</DecimalLine><DecimalLine><DecimalArrow right />0</DecimalLine></Decimals></Tool>
                </ButtonGroup>
              </ControlRow>
            </Rows>
          </Group>

          <Group label="Estilos" w={205}>
            <Big w={71} icon={<CondIcon />} lines={["Formato", "condicional"]} />
            <Big w={72} icon={<TableFmtIcon />} lines={["Dar formato", "como tabla"]} />
            <Big w={54} icon={<CellStyleIcon />} lines={["Estilos de", "celda"]} />
          </Group>

          <Group label="Celdas" w={146}>
            <Big w={44} icon={<InsertIcon />} lines={["Insertar"]} />
            <Big w={46} icon={<InsertIcon del />} lines={["Eliminar"]} />
            <Big w={48} icon={<FormatIcon />} lines={["Formato"]} />
          </Group>

          <Group label="Modificar" w={215}>
            <SmallTools>
              <TextTool><Sigma>Σ</Sigma>Autosuma <Caret /></TextTool>
              <TextTool><FillDownIcon />Rellenar <Caret /></TextTool>
              <TextTool><EraserIcon />Borrar <Caret /></TextTool>
            </SmallTools>
            <Big w={52} icon={<SortIcon />} lines={["Ordenar", "y filtrar"]} />
            <Big w={69} icon={<FindIcon />} lines={["Buscar y", "seleccionar"]} />
          </Group>
        </Ribbon>
      </RibbonFrame>

      <FormulaBar>
        <NameBox aria-label="Cuadro de nombres" defaultValue="B7" />
        <NameArrow aria-label="Nombres">
          <svg width="7" height="4" viewBox="0 0 7 4"><path d="M0 0h7L3.500 4z" /></svg>
        </NameArrow>
        <FxArea>
          <svg width="9" height="9" viewBox="0 0 9 9"><circle cx="4.500" cy="4.500" r="4" fill="#b9c4d4" /><circle cx="6" cy="6" r="2.500" fill="#eef3fa" /></svg>
          <Fx aria-label="Insertar función">fx</Fx>
        </FxArea>
        <FormulaInput aria-label="Fórmula" defaultValue="Insumo" />
        <ExpandButton aria-label="Expandir">
          <svg width="7" height="8" viewBox="0 0 7 8"><path d="M.5.5l3 3 3-3M.5 4.500l3 3 3-3" fill="none" stroke="#000" strokeWidth="1.400" /></svg>
        </ExpandButton>
      </FormulaBar>
      <BarGap />

      <SheetArea>
        <SheetView>
          <Grid>
            <colgroup>
              <Col $w={30} />
              {columns.map((c) => <Col key={c} $w={80} />)}
              <col />
            </colgroup>
            <thead>
              <tr>
                <Corner aria-label="Seleccionar todo">
                  <CornerMark width="9" height="9" viewBox="0 0 9 9"><path d="M9 0v9H0z" fill="#e6effb" /></CornerMark>
                </Corner>
                {columns.map((c) => <ColHead key={c} scope="col" $on={c === "B"}>{c}</ColHead>)}
                <ColHead />
              </tr>
            </thead>
            <tbody>
              {sheet.map((items, i) => (
                <tr key={i}>
                  <RowHead scope="row" $on={i === 6}>{i + 1}</RowHead>
                  <SheetRow items={items} />
                </tr>
              ))}
            </tbody>
          </Grid>
        </SheetView>
        <VScroll>
          <SplitHandle />
          <VButton aria-label="Subir"><NavGlyph dark d="M0 6L4.500 1 9 6z" /></VButton>
          <VThumb />
          <Filler />
          <VButton aria-label="Bajar"><NavGlyph dark d="M0 2l4.500 5L9 2z" /></VButton>
        </VScroll>
      </SheetArea>

      <SheetBar>
        <TabsArea>
          <NavButtons>
            <NavButton aria-label="Primera hoja"><NavGlyph d="M1 1h1.500v7H1zM7.500 1v7L3 4.500z" /></NavButton>
            <NavButton aria-label="Hoja anterior"><NavGlyph d="M6.500 1v7L2 4.500z" /></NavButton>
            <NavButton aria-label="Hoja siguiente"><NavGlyph d="M2.500 1v7L7 4.500z" /></NavButton>
            <NavButton aria-label="Última hoja"><NavGlyph d="M1.500 1v7L6 4.500zM6.500 1H8v7H6.500z" /></NavButton>
          </NavButtons>
          <SheetTab>Hoja1</SheetTab>
          <NewSheet aria-label="Insertar hoja">
            <svg width="44" height="15" viewBox="0 0 44 15">
              <path d="M0 0h9L0 13z" fill="#fff" />
              <path d="M9 0h33L30 14.500H-1z" fill="#cfe0f6" stroke="#7794c0" />
              <path d="M16.500 4.500h9v7l-2 2h-7z" fill="#fff" stroke="#6c82a8" />
              <path d="M15 0v8M11 4h8M12 1l6 6M18 1l-6 6" stroke="#dd9a2e" />
              <circle cx="15" cy="4" r="1.500" fill="#fff3b8" />
            </svg>
          </NewSheet>
        </TabsArea>
        <HScroll>
          <HHandle />
          <HButton aria-label="Izquierda"><NavGlyph dark d="M6.500 0v9L2 4.500z" /></HButton>
          <HTrack>
            <HThumb>
              <svg width="8" height="6" viewBox="0 0 8 6"><path d="M.5 0v6M2.500 0v6M4.500 0v6M6.500 0v6" stroke="#7d8899" /></svg>
            </HThumb>
          </HTrack>
          <HButton aria-label="Derecha"><NavGlyph dark d="M2.500 0v9L7 4.500z" /></HButton>
          <HHandle />
        </HScroll>
        <BarCorner />
      </SheetBar>

      <StatusBar>
        <StatusText>Listo</StatusText>
        <ViewTools>
          <ViewButtons>
            <ViewButton $on aria-label="Normal">
              <svg width="13" height="11" viewBox="0 0 13 11"><rect x=".5" y=".5" width="12" height="10" fill="#fff" stroke="#6b5a3a" /><path d="M4.500 0v11M8.500 0v11M0 3.500h13M0 7.500h13" stroke="#6b5a3a" /></svg>
            </ViewButton>
            <ViewButton aria-label="Diseño de página">
              <svg width="13" height="11" viewBox="0 0 13 11"><rect x=".5" y=".5" width="12" height="10" fill="#b9b9b9" stroke="#555" /><rect x="3.500" y="2" width="6" height="7.500" fill="#fff" stroke="#555" /><path d="M5 4.500h3M5 6.500h3" stroke="#555" /></svg>
            </ViewButton>
            <ViewButton aria-label="Saltos de página">
              <svg width="13" height="11" viewBox="0 0 13 11"><rect x=".5" y=".5" width="12" height="10" fill="#b9b9b9" stroke="#555" /><path d="M1 1h4v6H1zM6 1h3v6H6z" fill="#fff" stroke="#555" /></svg>
            </ViewButton>
          </ViewButtons>
          <ZoomValue>100%</ZoomValue>
          <button aria-label="Alejar"><ZoomGlyph d="M5 8.500h7" /></button>
          <ZoomRange type="range" aria-label="Zoom" defaultValue={50} />
          <button aria-label="Acercar"><ZoomGlyph d="M5 8.500h7M8.500 5v7" /></button>
        </ViewTools>
      </StatusBar>

      <Taskbar>
        <StartButton aria-label="Inicio de Windows">
          <svg width="16" height="16" viewBox="0 0 16 16"><path d="M0 2l7-1v6.500H0zM8 .9L16 0v7.500H8zM0 8.500h7V15l-7-1zM8 8.500h8V16l-8-1z" fill="#000" /></svg>
        </StartButton>
        <SearchBox>
          <svg width="17" height="17" viewBox="0 0 17 17"><circle cx="10.500" cy="6" r="5" fill="none" stroke="#222" strokeWidth="1.300" /><path d="M7 9.500L.5 16" stroke="#222" strokeWidth="1.300" /></svg>
          <SearchInput aria-label="Buscar" placeholder="Buscar" />
        </SearchBox>
        <TaskButton aria-label="Vista de tareas">
          <svg width="17" height="15" viewBox="0 0 17 15"><path d="M.5 0v2.500h11V0M.5 15v-2.500h11V15M1.500 4.500h9v5.500h-9zM15 0v3M15 8v7" fill="none" stroke="#000" strokeWidth="1.200" /><path d="M13.500 4.500h3v2.500h-3z" /></svg>
        </TaskButton>
        <TaskButton aria-label="Microsoft Store">
          <svg width="24" height="24" viewBox="0 0 24 24">
            <path d="M7 5V3q0-2 2-2h6q2 0 2 2v2" fill="none" stroke="#3bbfe8" strokeWidth="1.800" />
            <path d="M1 4h22v16q0 3-3 3H4q-3 0-3-3z" fill="#1b4f86" />
            <path d="M8 9h4v4.500H8z" fill="#f25022" /><path d="M13 9h4v4.500h-4z" fill="#7fba00" /><path d="M8 14.500h4V19H8z" fill="#00a4ef" /><path d="M13 14.500h4V19h-4z" fill="#ffb900" />
          </svg>
        </TaskButton>
        <TaskButton $open aria-label="Microsoft Edge">
          <svg width="24" height="24" viewBox="0 0 24 24">
            <defs>
              <linearGradient id="edgeTop"><stop offset="0" stopColor="#2aa6e8" /><stop offset="1" stopColor="#62d85a" /></linearGradient>
            </defs>
            <path d="M1 10C2 3 8 0 13 0c6 0 11 4 11 10 0 4-3 6-6 6-3 0-4-1-3-3 1-3-1-6-5-6-5 0-9 3-9 7z" fill="url(#edgeTop)" />
            <path d="M0 12c0-5 5-8 9-7 4 0 6 3 6 6-1-1-3-1-4 0-3 2-1 8 5 8 3 0 5-1 6-1-2 4-6 6-10 6C5 24 0 18 0 12z" fill="#1570c8" />
            <path d="M8 12c0 6 4 10 10 9l4-3c-5 2-12 0-12-5 0-1 1-2 2-2-2-1-4 0-4 1z" fill="#0c4a94" />
          </svg>
        </TaskButton>
        <TaskButton $open aria-label="Explorador de archivos">
          <svg width="22" height="19" viewBox="0 0 22 19">
            <path d="M0 3h22v15H0z" fill="#fcd462" /><path d="M0 3V1h9l2 2z" fill="#c98b12" />
            <path d="M4 18.500V10h14v8.500h-4V14H8v4.500z" fill="#3a92d8" />
          </svg>
        </TaskButton>
        <TaskButton $open aria-label="Google Chrome">
          <svg width="24" height="24" viewBox="0 0 24 24">
            <path d="M12 12L1.600 6A12 12 0 0 1 22.400 6z" fill="#e33b2e" />
            <path d="M12 12L22.400 6A12 12 0 0 1 12 24z" fill="#fbc116" />
            <path d="M12 12v12A12 12 0 0 1 1.600 6z" fill="#2da14c" />
            <path d="M12 6h10.400A12 12 0 0 1 12 24l5-9z" fill="#fbc116" />
            <circle cx="12" cy="12" r="5.600" fill="#fff" /><circle cx="12" cy="12" r="4.400" fill="#2f74e8" />
          </svg>
        </TaskButton>
        <TaskButton $active aria-label="Excel">
          <svg width="24" height="24" viewBox="0 0 24 24">
            <path d="M4 2l17-1 1 19-15 2z" fill="#fff" stroke="#8cc08a" />
            <path d="M1 5l3-4 17-.500-2 4z" fill="#e9f5e6" stroke="#6fb06c" />
            <path d="M1 5h13v13H1z" fill="#d7efd0" stroke="#5aa656" />
            <path d="M4 7l7 9M11 7l-7 9" stroke="#1f6b2c" strokeWidth="2.600" />
            <path d="M16 7h5v3h-5zM16 11.500h5v3h-5zM16 16h5v3h-5zM10 18h5v2.500h-5z" fill="#7bbf6a" />
          </svg>
        </TaskButton>
        <Tray>
          <TrayButton $w={82}>
            <svg width="24" height="24" viewBox="0 0 24 24">
              <path d="M9 0l14 3-3 12-12-3z" fill="#2f7de0" /><path d="M2 21l4 3 12-4-3-5z" fill="#6a3fd8" />
              <rect x="1" y="5" width="20" height="14" rx="2" fill="#ee4f7c" />
              <path d="M4 12l6-4v8z" fill="#fff" /><path d="M13 10h6M13 13h6M13 16h4" stroke="#fff" strokeWidth="1.300" />
            </svg>
            <NewsText>ÚLTI...</NewsText>
          </TrayButton>
          <TrayButton $w={36} aria-label="Iconos ocultos">
            <svg width="12" height="7" viewBox="0 0 12 7"><path d="M.5 6.500L6 1l5.500 5.500" fill="none" stroke="#111" strokeWidth="1.300" /></svg>
          </TrayButton>
          <TrayButton $w={28} aria-label="Reunirse ahora">
            <svg width="12" height="16" viewBox="0 0 12 16"><rect x="1" y="4.500" width="7" height="7" rx="1.500" fill="none" stroke="#111" strokeWidth="1.200" /><path d="M8 7l3-1.500v5L8 9M2 1.500q4-1.500 7 0M2 14.500q4 1.500 7 0" fill="none" stroke="#111" strokeWidth="1.200" /></svg>
          </TrayButton>
          <TrayButton $w={36} aria-label="Red">
            <svg width="14" height="14" viewBox="0 0 14 14"><path d="M1 13Q1 2 13 1.500M4 13q0-8 9-8M7 13q0-5 6-5" fill="none" stroke="#333" strokeWidth="1.100" /><circle cx="11.500" cy="11.500" r="1.500" /></svg>
          </TrayButton>
          <TrayButton $w={26} aria-label="Volumen">
            <svg width="17" height="14" viewBox="0 0 17 14"><path d="M.5 5h2.500l3.500-3.500v11L3 9H.5z" fill="none" stroke="#111" /><path d="M8.500 5q1.500 2 0 4M10.500 3q3 4 0 8" fill="none" stroke="#111" strokeWidth="1.100" /><path d="M13 1.500q4 5.500 0 11" fill="none" stroke="#999" /></svg>
          </TrayButton>
          <TrayButton $w={44} aria-label="Windows Ink">
            <svg width="17" height="16" viewBox="0 0 17 16"><path d="M5 13L11 1l2 1L8 13l-3 2zM5 8q-5 0-4 3 1 2 3 0M9 9q4-4 6-4 2 2-1 3-3 1-1 2 1 0 3-1" fill="none" stroke="#111" strokeWidth="1.300" /></svg>
          </TrayButton>
          <TrayButton $w={38} aria-label="Panel táctil">
            <svg width="15" height="12" viewBox="0 0 15 12"><path d="M.5.5h14v11H.5zM.5 7.500h14M7.500 7.500v4" fill="none" stroke="#111" strokeWidth="1.200" /></svg>
          </TrayButton>
          <TrayButton $w={36}>ESP</TrayButton>
          <Clock><span>11:14 a. m.</span><span>18/06/2024</span></Clock>
          <Notice aria-label="Notificaciones">
            <svg width="16" height="15" viewBox="0 0 16 15"><path d="M0 0h16v12h-9l-3 3v-3H0z" /><path d="M3 3.500h10M3 6h10M3 8.500h6" stroke="#d8d8d6" /></svg>
            <Badge>4</Badge>
          </Notice>
          <ShowDesktop aria-label="Mostrar escritorio" />
        </Tray>
      </Taskbar>
    </Window>
  );
}
